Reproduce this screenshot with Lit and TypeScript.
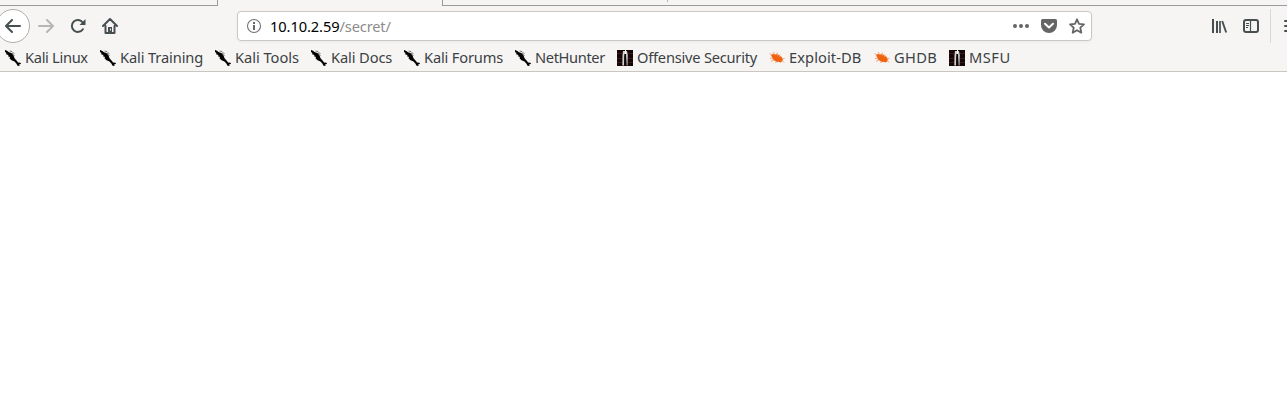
import { LitElement, html, svg, css } from "lit";
import { customElement } from "lit/decorators.js";

type Mark = { label: string; icon: "kali" | "offsec" | "bug"; width: number; tracking: number };

const MARKS: Mark[] = [
  { label: "Kali Linux", icon: "kali", width: 63, tracking: -0.32 },
  { label: "Kali Training", icon: "kali", width: 83, tracking: -0.12 },
  { label: "Kali Tools", icon: "kali", width: 64, tracking: -0.04 },
  { label: "Kali Docs", icon: "kali", width: 61, tracking: -0.12 },
  { label: "Kali Forums", icon: "kali", width: 79, tracking: -0.18 },
  { label: "NetHunter", icon: "kali", width: 70, tracking: -0.38 },
  { label: "Offensive Security", icon: "offsec", width: 120, tracking: -0.23 },
  { label: "Exploit-DB", icon: "bug", width: 73, tracking: 0.07 },
  { label: "GHDB", icon: "bug", width: 43, tracking: 0.3 },
  { label: "MSFU", icon: "offsec", width: 41, tracking: 0.5 },
];

const ICONS = {
  kali: svg`<path d="M0 0L2 .8 4 2.200 6.500 3 8.500 5.500 9.700 8.500 12 11 13 12.500 15.500 12.800 16 14 14.300 14.300 14.500 16 12.500 15.800 11.500 13.800 9.500 11.500 6.500 10.200 4.500 8.300 5 7 3 6.300 3.500 5 1 4.200 1.500 3 0 2z" fill="#000"/><path d="M4.500 1L7 1.500 9.500 4M7 3l2.500 3" fill="none" stroke="#333" stroke-width=".6"/>`,
  offsec: svg`<path d="M0 0h16v16H0z" fill="#160607"/><path d="M0 3.500h5M11 3.500h5M0 8.500h5M11 8.500h5M0 12.500h5M11 12.500h5" stroke="#3a1b1a" stroke-width="1"/><path d="M6 1h4l.8 4-.3 10.500H9.700L9 6H7.600L7 15.500H5.300L5.500 5z" fill="#d2d2ce"/><path d="M7.300 4h1.800v10H7.300z" fill="#0a0808"/><path d="M8 0h1v4H8z" fill="#fff"/>`,
  bug: svg`<path d="M2 5.500L4 3.800 6 4.500 8.500 4 11 6 12.500 6.700 14 9.700 13 11.500 11.500 12.500 9.500 11.800 7.500 12.200 6 10.800 4 10 3.500 8z" fill="#f0620d"/><path d="M.5 3.500L3 5M4.500 2L5.500 5M8 2.500L8.500 6M1 8.500L4 8M2 11.500L5 9.500M6.500 13L8 11M11 4.500L10.500 7M13 10.500L15 12.500M13 9L15.500 8.500" fill="none" stroke="#f59a66" stroke-width=".9"/>`,
};

@customElement("app-root")
export class AppRoot extends LitElement {
  static styles = css`
    :host { display: block; height: 409px; overflow: hidden; background: #fff; font-family: "Noto Sans", sans-serif; color: #3b4143; }
    * { box-sizing: border-box; }
    svg { display: block; flex: none; }
    .chrome { height: 72px; background: #f6f5f4; border-bottom: 1px solid #cac6c0; overflow: hidden; }
    .tabs { display: flex; height: 6px; }
    .before { width: 218px; border-right: 1px solid #9c9b99; border-bottom: 1px solid #9c9b99; }
    .active { width: 224px; }
    .after { flex: 1; border-left: 1px solid #9c9b99; border-bottom: 1px solid #9c9b99; padding-left: 224px; }
    .tick { width: 1px; height: 2px; background: #b5b3b0; }
    .nav { display: flex; height: 40px; padding-top: 3px; }
    .nav > * { flex: none; }
    .back { width: 34px; height: 34px; margin-left: -4px; border: 1px solid #b0aeab; border-radius: 50%; background: #fff; display: grid; place-items: center; }
    .btn { width: 32px; height: 34px; display: grid; place-items: center; }
    .home { margin-right: 111px; }
    .url { width: 855px; height: 30px; margin-top: 2px; border: 1px solid #cbc7c2; border-radius: 4px; background: #fff; box-shadow: 0 1px 3px rgba(0,0,0,.05); display: flex; align-items: center; padding: 0 6px 0 8px; }
    .address { flex: 1; margin-left: 8px; white-space: nowrap; font-size: 14.67px; line-height: 28px; color: #000; letter-spacing: -.1px; }
    .path { color: #8c8c8c; letter-spacing: -.15px; }
    .actions { display: flex; gap: 12px; }
    .library { margin-left: 111px; }
    .divider { width: 1px; height: 34px; background: #dad8d5; margin-left: 3px; }
    .menu { margin-left: 11px; margin-top: 9px; }
    .marks { display: flex; height: 25px; gap: 12px; padding-left: 5px; padding-top: 4px; }
    .mark { display: flex; gap: 4px; flex: none; }
    .label { white-space: nowrap; font-size: 14.67px; line-height: 14px; }
  `;

  render() {
    return html`
      <div class="chrome">
        <div class="tabs">
          <div class="before"></div><div class="active"></div>
          <div class="after"><div class="tick"></div></div>
        </div>
        <div class="nav">
          <div class="back">
            <svg width="16" height="16" fill="none" stroke="#474f51" stroke-width="2" stroke-linecap="round" stroke-linejoin="round"><path d="M15 8H1.500M7 2L1 8l6 6"/></svg>
          </div>
          <div class="btn">
            <svg width="16" height="16" fill="none" stroke="#b5b6b5" stroke-width="2" stroke-linecap="round" stroke-linejoin="round"><path d="M1 8h13.500M9 2l6 6-6 6"/></svg>
          </div>
          <div class="btn">
            <svg width="16" height="16" fill="none" stroke="#474f51" stroke-width="2"><path d="M12.900 11.200A6 6 0 1 1 12.800 4.500" stroke-linecap="round"/><path d="M15.500 1v6h-6z" fill="#474f51" stroke="none"/></svg>
          </div>
          <div class="btn home">
            <svg width="16" height="16" fill="none" stroke="#474f51" stroke-width="2" stroke-linejoin="round" stroke-linecap="round"><path d="M1 8l7-7 7 7M3.500 8v7h9V8"/><path d="M6 9h4v6H6z" fill="#474f51" stroke="none"/><path d="M8.500 11v1" stroke="#f6f5f4" stroke-width="1"/></svg>
          </div>
          <div class="url">
            <svg width="16" height="16"><circle cx="8" cy="8" r="6.500" fill="none" stroke="#737373" stroke-width="1.100"/><path d="M7 7h2v5H7zM7 4h2v2H7z" fill="#666"/></svg>
            <div class="address">10.10.2.59<span class="path">/secret/</span></div>
            <div class="actions">
              <svg width="16" height="16" fill="#656565"><circle cx="2" cy="8" r="2"/><circle cx="8" cy="8" r="2"/><circle cx="14" cy="8" r="2"/></svg>
              <svg width="16" height="16"><path d="M1.500 1h13q1.500 0 1.500 1.500V7a8 8 0 0 1-16 0V2.500Q0 1 1.500 1z" fill="#656565"/><path d="M4 5.700l4 3.800 4-3.800" fill="none" stroke="#fff" stroke-width="2" stroke-linecap="round" stroke-linejoin="round"/></svg>
              <svg width="16" height="16"><path d="M8 1.300l2 4.500 5 .5-3.700 3.400 1 5L8 12.200l-4.300 2.500 1-5L1 6.300l5-.5z" fill="none" stroke="#656565" stroke-width="1.800" stroke-linejoin="round"/></svg>
            </div>
          </div>
          <div class="btn library">
            <svg width="16" height="16" fill="none" stroke="#474f51" stroke-width="2"><path d="M2 1v14M6 3v12"/><path d="M9 3v12" stroke-width="1.700"/><path d="M11.200 3l4 11.500" stroke-width="1.900"/></svg>
          </div>
          <div class="btn">
            <svg width="16" height="16" fill="none" stroke="#474f51"><rect x="1" y="2" width="14" height="12" rx="2" stroke-width="2"/><path d="M7.500 2v12" stroke-width="1.200"/><path d="M3 5.500h3M3 7.500h3M3 9.500h2"/></svg>
          </div>
          <div class="divider"></div>
          <svg class="menu" width="16" height="16" stroke="#474f51" stroke-width="2" stroke-linecap="round"><path d="M3 3h12M3 8h12M3 13h12"/></svg>
        </div>
        <div class="marks">
          ${MARKS.map((m) => html`<div class="mark"><svg width="16" height="16">${ICONS[m.icon]}</svg><div class="label" style="width:${m.width}px;letter-spacing:${m.tracking}px">${m.label}</div></div>`)}
        </div>
      </div>
    `;
  }
}
